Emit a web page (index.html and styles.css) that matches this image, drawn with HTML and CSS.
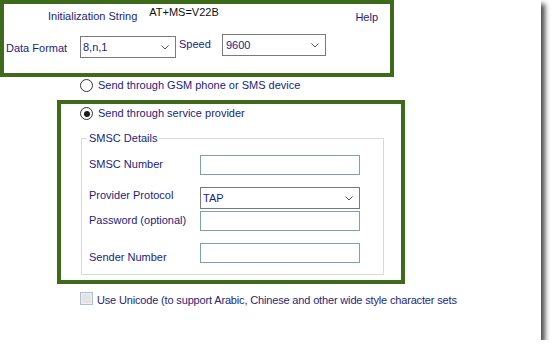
FILE: index.html
```html
<!DOCTYPE html>
<html>
<head>
<meta charset="utf-8">
<link rel="stylesheet" href="styles.css">
</head>
<body>
<div class="panel">
  <div class="top-box">
    <div class="row1">
      <span class="init-label">Initialization String</span>
      <span class="init-value">AT+MS=V22B</span>
      <span class="help">Help</span>
    </div>
    <div class="row2">
      <span class="df-label">Data Format</span>
      <div class="combo combo-df"><span class="combo-text">8,n,1</span><svg class="chev" width="8" height="5" viewBox="0 0 8 5"><polyline points="0.5,0.5 4,4 7.5,0.5" fill="none" stroke="#505050" stroke-width="1"/></svg></div>
      <span class="speed-label">Speed</span>
      <div class="combo combo-speed"><span class="combo-text">9600</span><svg class="chev" width="8" height="5" viewBox="0 0 8 5"><polyline points="0.5,0.5 4,4 7.5,0.5" fill="none" stroke="#505050" stroke-width="1"/></svg></div>
    </div>
  </div>

  <div class="radio-row radio-gsm"><span class="radio"></span><span class="radio-text">Send through GSM phone or SMS device</span></div>

  <div class="provider-box">
    <div class="radio-row radio-sp"><span class="radio checked"></span><span class="radio-text">Send through service provider</span></div>
    <fieldset class="smsc">
      <legend>SMSC Details</legend>
      <div class="field f-number"><span class="field-label">SMSC Number</span><div class="input"></div></div>
      <div class="field f-protocol"><span class="field-label">Provider Protocol</span><div class="combo combo-tap"><span class="combo-text">TAP</span><svg class="chev" width="8" height="5" viewBox="0 0 8 5"><polyline points="0.5,0.5 4,4 7.5,0.5" fill="none" stroke="#505050" stroke-width="1"/></svg></div></div>
      <div class="field f-password"><span class="field-label">Password (optional)</span><div class="input"></div></div>
      <div class="field f-sender"><span class="field-label">Sender Number</span><div class="input"></div></div>
    </fieldset>
  </div>

  <div class="check-row"><span class="checkbox"></span><span class="check-text">Use Unicode (to support Arabic, Chinese and other wide style character sets</span></div>
</div>
</body>
</html>
```

FILE: styles.css
```css
html, body {
  margin: 0;
  padding: 0;
  background: #ffffff;
}
body {
  font-family: "Liberation Sans", Arial, sans-serif;
  font-size: 11px;
  line-height: 13px;
  color: #1c1c80;
}
.panel {
  width: 541px;
  height: 340px;
  background: #ffffff;
  box-shadow: 4px 4px 5px rgba(0, 0, 0, 0.7);
  display: flex;
  flex-direction: column;
  align-items: flex-start;
}
.top-box {
  box-sizing: border-box;
  width: 394px;
  height: 77px;
  border: 4px solid #3e6b1b;
  padding-right: 12px;
  display: flex;
  flex-direction: column;
}
.row1 {
  height: 30px;
  display: flex;
  align-items: flex-start;
}
.init-label {
  margin-left: 44px;
  margin-top: 6px;
}
.init-value {
  margin-left: 12px;
  margin-top: 2px;
  color: #101010;
}
.help {
  margin-left: auto;
  margin-top: 7px;
}
.row2 {
  display: flex;
  align-items: flex-start;
}
.df-label {
  margin-left: 2px;
  margin-top: 8px;
  width: 74px;
}
.speed-label {
  margin-left: 3px;
  margin-top: 4px;
  width: 43px;
}
.combo {
  box-sizing: border-box;
  height: 22px;
  border: 1px solid #7a7a7a;
  background: #ffffff;
  display: flex;
  align-items: center;
  justify-content: space-between;
  padding: 0 6px 0 2px;
}
.combo-text {
  color: #1a1a90;
}
.combo-df {
  width: 96px;
  margin-top: 2px;
}
.combo-speed {
  width: 104px;
  margin-top: 0;
  padding-left: 3px;
}
.chev {
  display: block;
  margin-top: 1px;
}
.radio-row {
  display: flex;
  align-items: center;
}
.radio {
  box-sizing: border-box;
  width: 13px;
  height: 13px;
  border: 1px solid #333333;
  border-radius: 50%;
  background: #ffffff;
  display: flex;
  align-items: center;
  justify-content: center;
}
.radio.checked::after {
  content: "";
  width: 6px;
  height: 6px;
  border-radius: 50%;
  background: #1a1a1a;
}
.radio-text {
  margin-left: 5px;
}
.radio-gsm {
  margin-left: 80px;
  margin-top: 2px;
}
.provider-box {
  box-sizing: border-box;
  width: 348px;
  height: 184px;
  margin-left: 57px;
  margin-top: 8px;
  border: 4px solid #3e6b1b;
  display: flex;
  flex-direction: column;
  align-items: flex-start;
}
.radio-sp {
  margin-left: 19px;
  margin-top: 3px;
}
.smsc {
  box-sizing: border-box;
  width: 303px;
  margin: 12px 0 0 20px;
  padding: 10px 0 10px 5px;
  border: 1px solid #d9d9d9;
  min-inline-size: 0;
}
.smsc legend {
  padding: 0 2px;
  margin: 0;
  line-height: 13px;
}
.field {
  display: flex;
  align-items: flex-start;
  padding-left: 2px;
}
.field-label {
  width: 111px;
}
.input {
  box-sizing: border-box;
  width: 160px;
  height: 20px;
  border: 1px solid #7f9db9;
  background: #ffffff;
}
.combo-tap {
  width: 160px;
}
.f-number .field-label { padding-top: 3px; }
.f-protocol { margin-top: 12px; }
.f-protocol .field-label { padding-top: 2px; }
.f-password { margin-top: 2px; }
.f-password .field-label { padding-top: 3px; }
.f-sender { margin-top: 12px; }
.f-sender .field-label { padding-top: 8px; }
.check-row {
  display: flex;
  align-items: flex-start;
  margin-left: 80px;
  margin-top: 8px;
}
.checkbox {
  box-sizing: border-box;
  width: 13px;
  height: 13px;
  border: 1px solid #b0bfd8;
  background: #e4e4e4;
  box-shadow: inset 0 0 0 1px #efefef;
}
.check-text {
  margin-left: 4px;
  padding-top: 2px;
  letter-spacing: -0.16px;
  color: #262678;
}
```
